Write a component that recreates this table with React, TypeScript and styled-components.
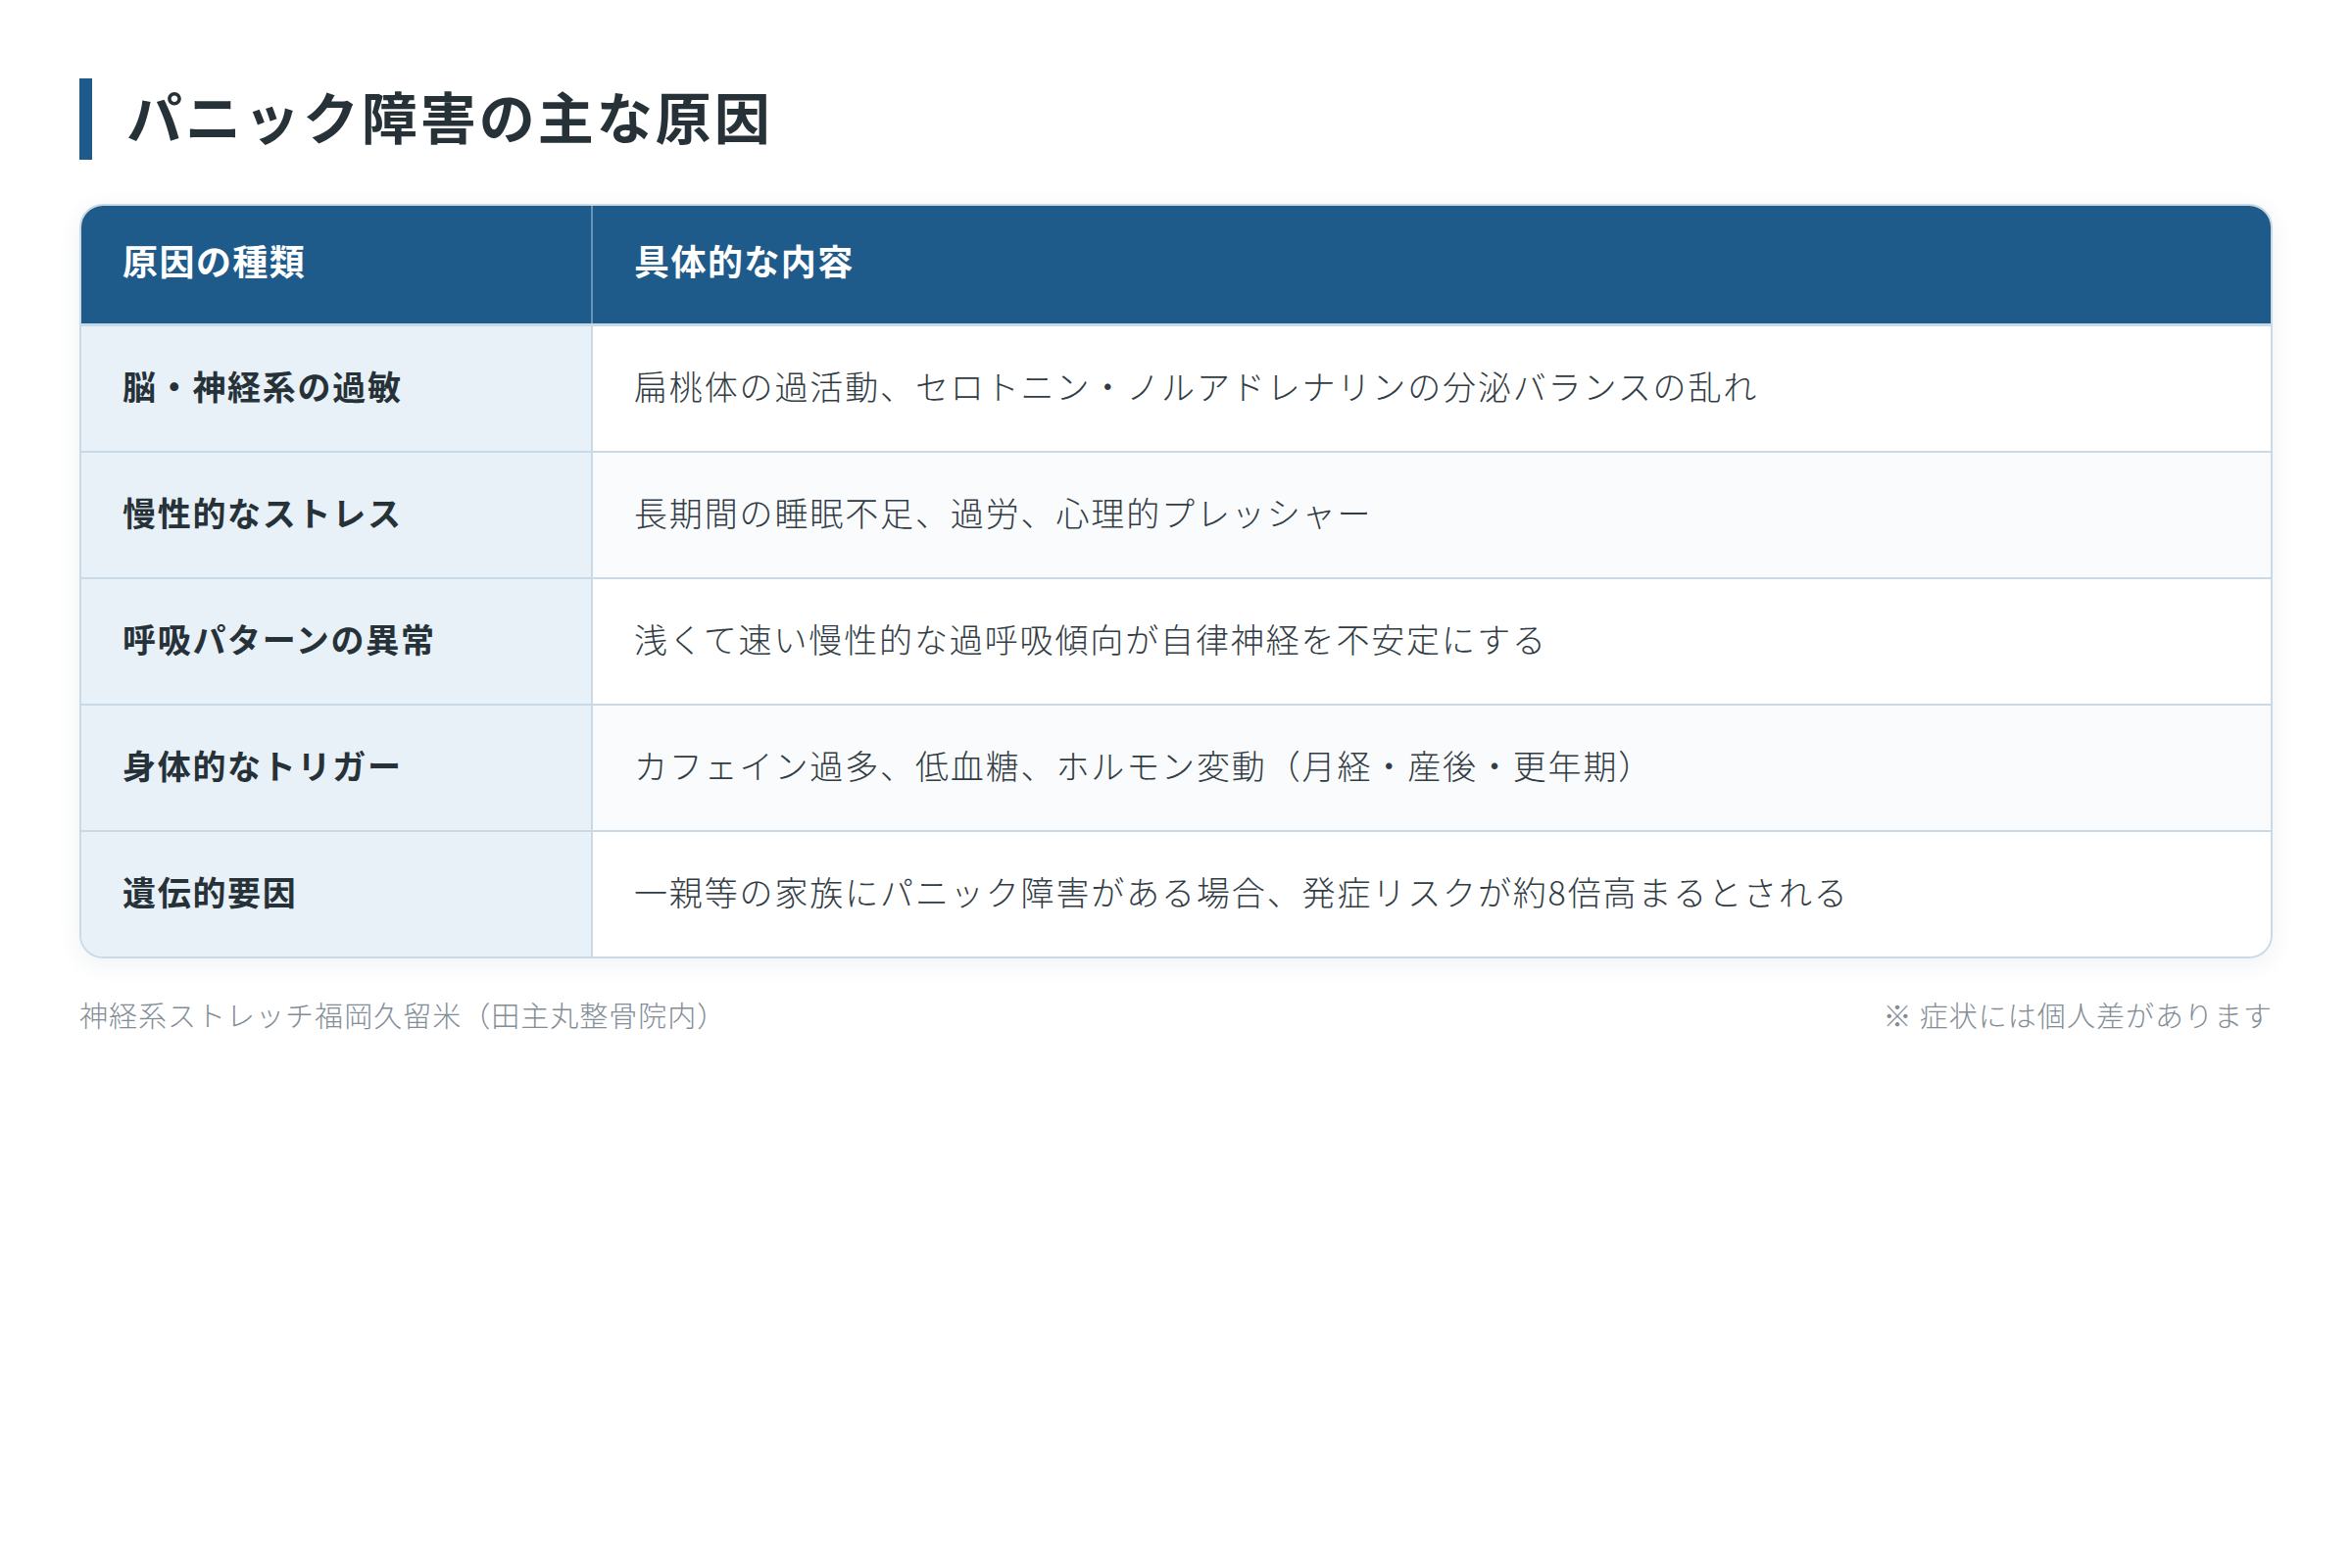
import React from 'react'
import styled, { createGlobalStyle } from 'styled-components'

const GlobalStyle = createGlobalStyle`
  html, body {
    margin: 0;
    padding: 0;
    background: #ffffff;
  }
  body {
    font-family: 'Noto Sans CJK JP', 'Noto Sans', sans-serif;
  }
`

const Page = styled.div`
  padding: 80px 81px;
  box-sizing: border-box;
  width: 2400px;
`

const Title = styled.h2`
  margin: 0 0 45px;
  border-left: 13px solid #1f5b8a;
  padding: 0 0 8px 35px;
  font-size: 57px;
  line-height: 75px;
  font-weight: 700;
  letter-spacing: 0.052em;
  color: #263238;
`

const TableWrap = styled.div`
  border: 2px solid #c9d9e6;
  border-radius: 24px;
  overflow: hidden;
  box-shadow: 0 6px 24px rgba(31, 60, 90, 0.07);
`

const Table = styled.table`
  width: 100%;
  border-collapse: collapse;
  table-layout: fixed;
`

const HeadCell = styled.th<{ $first?: boolean }>`
  background: #1f5b8a;
  color: #ffffff;
  text-align: left;
  font-size: 36px;
  font-weight: 700;
  letter-spacing: 0.04em;
  line-height: 54px;
  padding: 28px 40px 38px 42px;
  border-bottom: 3px solid #c9d9e6;
  border-right: ${({ $first }) => ($first ? '2px solid rgba(255,255,255,0.35)' : 'none')};
`

const Row = styled.tr<{ $alt: boolean }>`
  & > td:last-child {
    background: ${({ $alt }) => ($alt ? '#f9fbfd' : '#ffffff')};
  }
  &:not(:last-child) > td {
    border-bottom: 2px solid #c9d9e6;
  }
`

const LabelCell = styled.td`
  width: 479px;
  background: #e8f0f8;
  color: #263238;
  font-size: 34px;
  font-weight: 700;
  letter-spacing: 0.05em;
  line-height: 51px;
  padding: 35px 40px 41px 42px;
  border-right: 2px solid #c9d9e6;
`

const TextCell = styled.td`
  color: #323c44;
  font-size: 34px;
  font-weight: 300;
  letter-spacing: 0.055em;
  line-height: 51px;
  padding: 35px 40px 41px 42px;
`

const Footer = styled.div`
  display: flex;
  justify-content: space-between;
  align-items: center;
  margin-top: 36px;
  font-size: 29px;
  font-weight: 300;
  letter-spacing: 0.035em;
  line-height: 42px;
  color: #838d96;
`

const rows = [
  ['脳・神経系の過敏', '扁桃体の過活動、セロトニン・ノルアドレナリンの分泌バランスの乱れ'],
  ['慢性的なストレス', '長期間の睡眠不足、過労、心理的プレッシャー'],
  ['呼吸パターンの異常', '浅くて速い慢性的な過呼吸傾向が自律神経を不安定にする'],
  ['身体的なトリガー', 'カフェイン過多、低血糖、ホルモン変動（月経・産後・更年期）'],
  ['遺伝的要因', '一親等の家族にパニック障害がある場合、発症リスクが約8倍高まるとされる'],
]

const App: React.FC = () => {
  return (
    <>
      <GlobalStyle />
      <Page>
        <Title>パニック障害の主な原因</Title>
        <TableWrap>
          <Table>
            <colgroup>
              <col style={{ width: '521px' }} />
              <col />
            </colgroup>
            <thead>
              <tr>
                <HeadCell $first>原因の種類</HeadCell>
                <HeadCell>具体的な内容</HeadCell>
              </tr>
            </thead>
            <tbody>
              {rows.map(([label, text], idx) => (
                <Row key={label} $alt={idx % 2 === 1}>
                  <LabelCell>{label}</LabelCell>
                  <TextCell>{text}</TextCell>
                </Row>
              ))}
            </tbody>
          </Table>
        </TableWrap>
        <Footer>
          <span>神経系ストレッチ福岡久留米（田主丸整骨院内）</span>
          <span>※ 症状には個人差があります</span>
        </Footer>
      </Page>
    </>
  )
}

export default App
